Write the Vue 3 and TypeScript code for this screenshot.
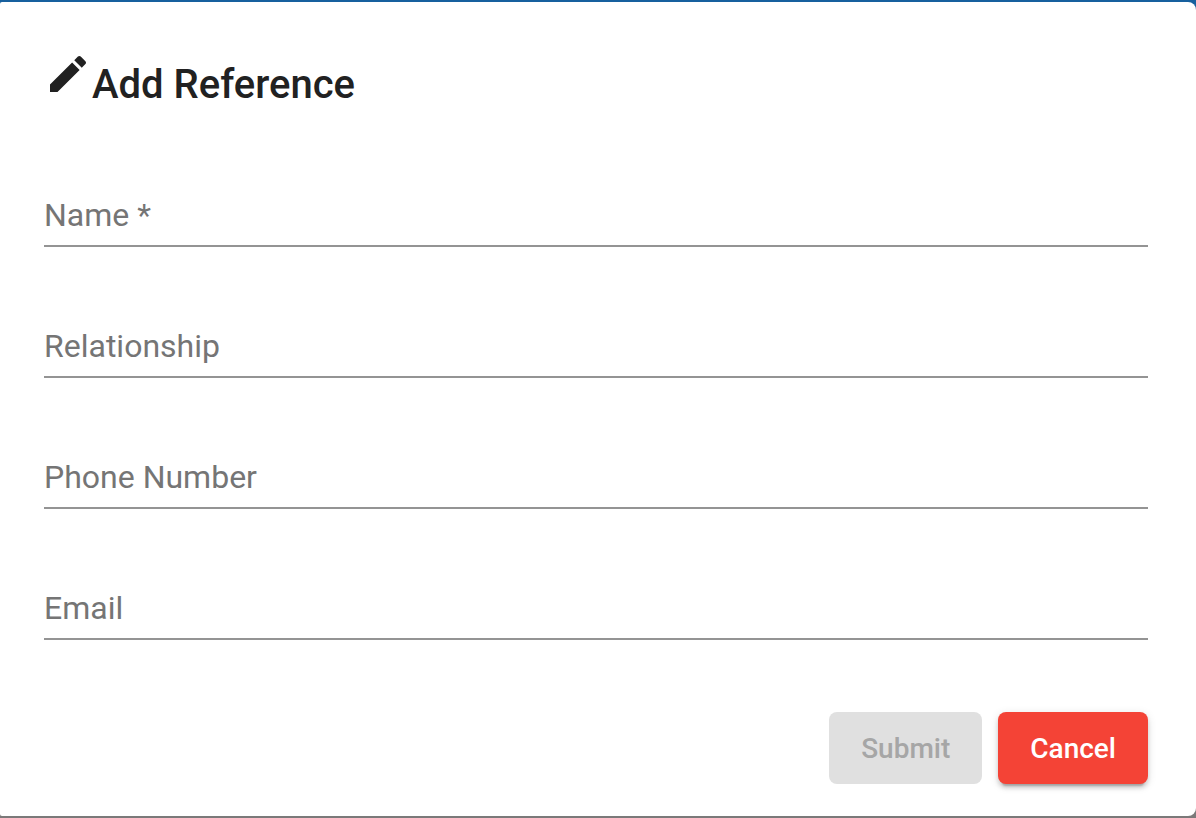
<script setup lang="ts">
import { reactive, computed } from 'vue'

type FieldKey = 'name' | 'relationship' | 'phone' | 'email'

interface Field {
  key: FieldKey
  label: string
  type: string
  required: boolean
}

const fields: Field[] = [
  { key: 'name', label: 'Name', type: 'text', required: true },
  { key: 'relationship', label: 'Relationship', type: 'text', required: false },
  { key: 'phone', label: 'Phone Number', type: 'tel', required: false },
  { key: 'email', label: 'Email', type: 'email', required: false },
]

const form = reactive<Record<FieldKey, string>>({
  name: '',
  relationship: '',
  phone: '',
  email: '',
})

const canSubmit = computed(() => form.name.trim().length > 0)

function reset(): void {
  for (const field of fields) form[field.key] = ''
}
</script>

<template>
  <div class="backdrop">
    <form class="dialog" role="dialog" aria-labelledby="dialog-title" @submit.prevent>
      <h1 id="dialog-title" class="title">
        <svg class="title-icon" viewBox="0 0 24 24" aria-hidden="true">
          <path
            d="M3 17.25V21h3.75L17.81 9.94l-3.75-3.75L3 17.25zM20.71 7.04c.39-.39.39-1.02 0-1.41l-2.34-2.34c-.39-.39-1.02-.39-1.41 0l-1.83 1.83 3.75 3.75 1.83-1.83z"
          />
        </svg>
        <span class="title-text">Add Reference</span>
      </h1>

      <div class="fields">
        <div v-for="field in fields" :key="field.key" class="field">
          <label class="label" :class="{ filled: form[field.key] }" :for="field.key">
            {{ field.label }}<span v-if="field.required" aria-hidden="true"> *</span>
          </label>
          <input
            :id="field.key"
            v-model="form[field.key]"
            class="input"
            :type="field.type"
            :required="field.required"
          />
        </div>
      </div>

      <div class="actions">
        <button class="button submit" type="submit" :disabled="!canSubmit">Submit</button>
        <button class="button cancel" type="button" @click="reset">Cancel</button>
      </div>
    </form>
  </div>
</template>

<style>
body {
  margin: 0;
  background: #7b7979;
}
</style>

<style scoped>
.backdrop {
  box-sizing: border-box;
  min-height: 100vh;
  padding: 2px 0;
  display: flex;
  background: linear-gradient(#17609e 50%, #7b7979 50%);
  font-family: Roboto, "Liberation Sans", sans-serif;
}

.dialog {
  box-sizing: border-box;
  flex: 1;
  display: flex;
  flex-direction: column;
  padding: 48px 48px 32px 44px;
  border-radius: 2px 8px 8px 2px;
  background: #fff;
}

.title {
  display: flex;
  align-items: flex-start;
  margin: 0;
  color: #212121;
  font-size: 40px;
  font-weight: 500;
  line-height: 68px;
}

.title-icon {
  width: 48px;
  height: 48px;
  fill: currentColor;
}

.title-text {
  padding-top: 1px;
}

.fields {
  display: grid;
  gap: 67px;
  margin-top: 64px;
}

.field {
  display: grid;
  height: 64px;
  border-bottom: 2px solid #949494;
  box-sizing: border-box;
}

.label,
.input {
  grid-area: 1 / 1;
  font-size: 32px;
  line-height: 36px;
}

.label {
  padding-top: 14px;
  color: #757575;
  pointer-events: none;
}

.label.filled {
  visibility: hidden;
}

.input {
  width: 100%;
  box-sizing: border-box;
  padding: 14px 0 12px;
  border: 0;
  outline: 0;
  background: transparent;
  color: #212121;
  font-family: inherit;
}

.actions {
  display: flex;
  justify-content: flex-end;
  gap: 16px;
  margin-top: auto;
}

.button {
  padding: 2px 32px 0;
  border: 0;
  border-radius: 8px;
  font-family: inherit;
  font-size: 28px;
  font-weight: 500;
  line-height: 70px;
}

.submit {
  background: #1976d2;
  color: #fff;
}

.submit:disabled {
  background: #e0e0e0;
  color: #a6a6a6;
}

.cancel {
  background: #f44336;
  color: #fff;
  box-shadow:
    0 6px 2px -4px rgba(0, 0, 0, 0.2),
    0 4px 4px 0 rgba(0, 0, 0, 0.14),
    0 2px 10px 0 rgba(0, 0, 0, 0.12);
}
</style>
